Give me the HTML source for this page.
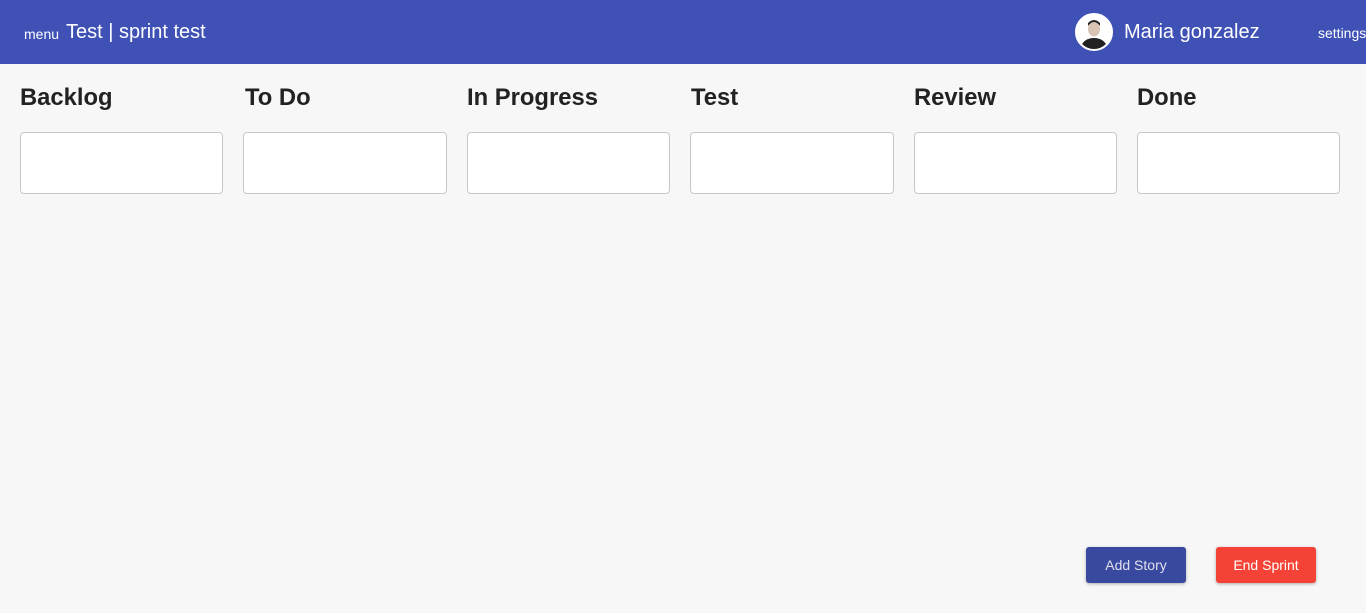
<!DOCTYPE html>
<html><head><meta charset="utf-8"><style>
*{box-sizing:border-box;margin:0;padding:0}
body{width:1366px;height:613px;background:#f7f7f7;font-family:"Liberation Sans",sans-serif;position:relative;overflow:hidden}
.bar{position:absolute;left:0;top:0;width:1366px;height:64px;background:#3f51b5;color:#fff}
.menu{position:absolute;left:24px;top:26px;font-size:14px}
.title{position:absolute;left:66px;top:21px;font-size:20px}
.av{position:absolute;left:1075px;top:13px;width:38px;height:38px;border-radius:50%;background:#fff;border:2px solid #fff;overflow:hidden}
.name{position:absolute;left:1124px;top:21px;font-size:20px}
.set{position:absolute;left:1318px;top:25px;font-size:14px}
h2{position:absolute;top:84px;font-size:23.8px;font-weight:bold;color:#222}
.box{position:absolute;top:132px;width:203px;height:62px;background:#fff;border:1px solid #c8c8c8;border-radius:4px}
.btn{position:absolute;top:547px;height:36px;width:100px;border-radius:3px;color:#fff;font-size:14px;text-align:center;line-height:36px;box-shadow:0 1px 3px rgba(0,0,0,.3)}
</style></head><body>
<div class="bar">
<span class="menu">menu</span><span class="title">Test | sprint test</span>
<div class="av"><svg width="34" height="34" viewBox="0 0 34 34"><ellipse cx="17" cy="14" rx="6" ry="7.5" fill="#d8c2b4"/><path d="M11 11 Q17 3 23 11 L23 8 Q17 2 11 8Z" fill="#222"/><path d="M3 34 Q6 23 17 23 Q28 23 31 34Z" fill="#222"/></svg></div>
<span class="name">Maria gonzalez</span><span class="set">settings</span>
</div>
<h2 style="left:20px">Backlog</h2><h2 style="left:245px">To Do</h2><h2 style="left:467px">In Progress</h2><h2 style="left:691px">Test</h2><h2 style="left:914px">Review</h2><h2 style="left:1137px">Done</h2>
<div class="box" style="left:20px"></div><div class="box" style="left:243px;width:204px"></div><div class="box" style="left:467px"></div><div class="box" style="left:690px;width:204px"></div><div class="box" style="left:914px"></div><div class="box" style="left:1137px"></div>
<div class="btn" style="left:1086px;background:#3949a0;color:#e0e0ee">Add Story</div>
<div class="btn" style="left:1216px;background:#f44336">End Sprint</div>
</body></html>
